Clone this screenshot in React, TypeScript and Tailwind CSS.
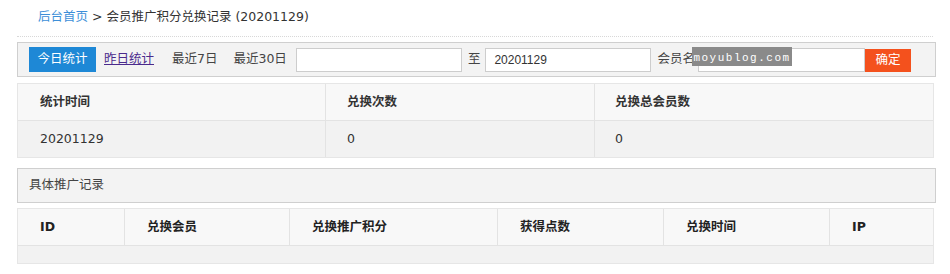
const font = { fontFamily: '"DejaVu Sans", "Noto Sans CJK SC", sans-serif' }

function Breadcrumb() {
  return (
    <div className="mx-[17px] h-[37px] border-b border-dotted border-[#d8d8d8] pl-[21px] pt-[8px] text-[12.5px] text-[#333]">
      <a className="text-[#3d8fd8]">后台首页</a>
      <span> &gt; 会员推广积分兑换记录 (20201129)</span>
    </div>
  )
}

function FilterBar() {
  return (
    <div className="relative mt-[5px] flex h-[35px] w-[919px] items-center border border-[#cfcfcf] bg-[#f3f3f3] pl-[11px] text-[12.5px] text-[#444]">
      <span className="flex h-[25px] w-[67px] items-center justify-center bg-[#1e88d6] text-white">今日统计</span>
      <a className="ml-[8px] text-[#4b2a8c] underline">昨日统计</a>
      <span className="ml-[18px]">最近7日</span>
      <span className="ml-[16px]">最近30日</span>
      <input className="ml-[9px] h-[24px] w-[166px] border border-[#cdcdcd] bg-white px-2 text-[12px]" />
      <span className="ml-[6px]">至</span>
      <input
        defaultValue="20201129"
        className="ml-[5px] h-[24px] w-[166px] border border-[#cdcdcd] bg-white px-[8px] text-[12px] text-[#333]"
        style={{ fontFamily: '"Liberation Sans", Arial, sans-serif' }}
      />
      <span className="ml-[6px]">会员名</span>
      <input className="ml-[3px] h-[24px] w-[167px] border border-[#cdcdcd] bg-white px-2 text-[12px]" />
      <span className="mt-[1px] flex h-[23px] w-[46px] items-center justify-center bg-[#f4511d] text-white">确定</span>
      <span
        className="absolute left-[674px] top-[4px] flex h-[19px] w-[100px] items-center justify-center bg-[#8a8a8a] pt-[3px] text-[11px] tracking-[1.5px] text-white"
        style={{ fontFamily: '"Liberation Mono", monospace' }}
      >
        moyublog.com
      </span>
    </div>
  )
}

function StatsTable() {
  const cols = 'grid grid-cols-[308px_269px_340px]'
  return (
    <div className="mt-[6px] w-[917px] border border-[#e6e6e6] text-[12.5px] text-[#333]">
      <div className={`${cols} h-[36px] items-center bg-[#f8f8f8] font-bold`}>
        <div className="flex h-full items-center border-r border-[#e3e3e3] pl-[22px]">统计时间</div>
        <div className="flex h-full items-center border-r border-[#e3e3e3] pl-[21px]">兑换次数</div>
        <div className="flex h-full items-center pl-[20px]">兑换总会员数</div>
      </div>
      <div className={`${cols} h-[37px] border-t border-[#e3e3e3] bg-[#f2f2f2]`}>
        <div className="flex h-full items-center border-r border-[#e3e3e3] pl-[22px]">20201129</div>
        <div className="flex h-full items-center border-r border-[#e3e3e3] pl-[21px]">0</div>
        <div className="flex h-full items-center pl-[20px]">0</div>
      </div>
    </div>
  )
}

function RecordTable() {
  const cols = 'grid grid-cols-[107px_165px_208px_166px_166px_105px]'
  const heads = ['ID', '兑换会员', '兑换推广积分', '获得点数', '兑换时间', 'IP']
  return (
    <div className="mt-[5px] w-[917px] border border-[#e6e6e6] text-[12.5px] text-[#222]">
      <div className={`${cols} h-[36px] bg-[#f8f8f8] font-bold`}>
        {heads.map((h, i) => (
          <div
            key={h}
            className={`flex h-full items-center pl-[22px] ${i < heads.length - 1 ? 'border-r border-[#e3e3e3]' : ''}`}
          >
            {h}
          </div>
        ))}
      </div>
      <div className="h-[18px] border-t border-[#e3e3e3] bg-[#f2f2f2]" />
    </div>
  )
}

export default function App() {
  return (
    <div className="h-[274px] w-[950px] bg-white" style={font}>
      <Breadcrumb />
      <div className="ml-[17px]">
        <FilterBar />
        <StatsTable />
        <div className="mt-[10px] flex h-[35px] w-[919px] items-center border border-[#cfcfcf] bg-[#f3f3f3] pl-[11px] text-[12.5px] text-[#444]">
          具体推广记录
        </div>
        <RecordTable />
      </div>
    </div>
  )
}
